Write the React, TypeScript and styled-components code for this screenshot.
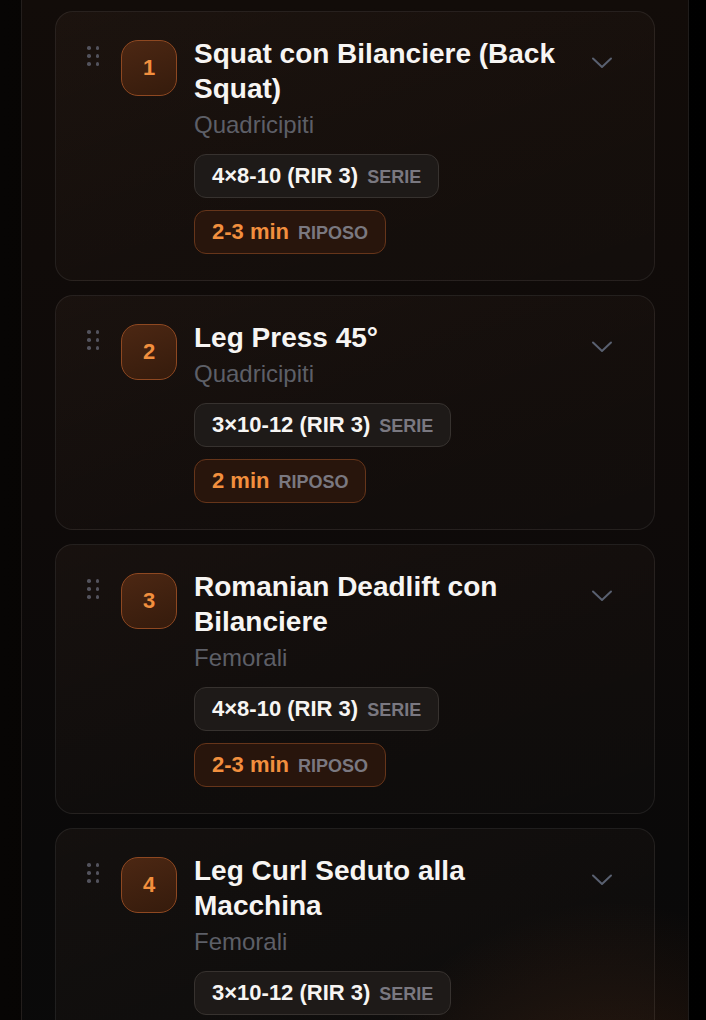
import React from 'react';
import styled, { createGlobalStyle } from 'styled-components';

const GlobalStyle = createGlobalStyle`
    html, body {
        margin: 0;
        padding: 0;
        background: #040303;
        font-family: "Liberation Sans", Arial, sans-serif;
        overflow: hidden;
    }
`;

interface Exercise {
    name: string;
    muscle: string;
    sets: string;
    rest: string;
}

const exercises: Exercise[] = [
    { name: 'Squat con Bilanciere (Back Squat)', muscle: 'Quadricipiti', sets: '4×8-10 (RIR 3)', rest: '2-3 min' },
    { name: 'Leg Press 45°', muscle: 'Quadricipiti', sets: '3×10-12 (RIR 3)', rest: '2 min' },
    { name: 'Romanian Deadlift con Bilanciere', muscle: 'Femorali', sets: '4×8-10 (RIR 3)', rest: '2-3 min' },
    { name: 'Leg Curl Seduto alla Macchina', muscle: 'Femorali', sets: '3×10-12 (RIR 3)', rest: '2 min' },
];

const Page = styled.div`
    display: flex;
    min-height: 100vh;
    padding: 0 17px 0 21px;
    background: linear-gradient(90deg, #070504 0%, #000 100%);
`;

const Panel = styled.div`
    flex: 1;
    display: flex;
    flex-direction: column;
    gap: 14px;
    padding: 11px 33px 40px;
    border-left: 1px solid #231e1c;
    border-right: 1px solid #1f1c1b;
    background:
        radial-gradient(circle at 88% 102%, rgba(190, 85, 25, 0.2) 0%, rgba(190, 85, 25, 0) 20%),
        linear-gradient(180deg, #120c09 0%, #0e0a09 45%, #0a0909 75%, #0a0a0a 100%);
`;

const Card = styled.div`
    display: flex;
    align-items: flex-start;
    padding: 24px 30px 26px 30px;
    border: 1px solid rgba(255, 255, 255, 0.075);
    border-radius: 18px;
    background: linear-gradient(160deg, rgba(255, 190, 150, 0.045) 0%, rgba(255, 200, 170, 0.025) 60%, rgba(255, 255, 255, 0.015) 100%);
`;

const Handle = styled.div`
    display: grid;
    grid-template-columns: repeat(2, 3.5px);
    grid-auto-rows: 3.5px;
    column-gap: 5px;
    row-gap: 4.5px;
    margin: 10px 22px 0 1px;
    span {
        width: 3.5px;
        height: 3.5px;
        border-radius: 50%;
        background: #53535d;
    }
`;

const Badge = styled.div`
    flex: none;
    box-sizing: border-box;
    width: 56px;
    height: 56px;
    margin-top: 4px;
    margin-right: 17px;
    display: flex;
    align-items: center;
    justify-content: center;
    border-radius: 17px;
    border: 1.5px solid #8e4821;
    background: linear-gradient(160deg, #4c2713 0%, #351b0c 100%);
    color: #f28f3e;
    font-size: 22px;
    font-weight: 700;
`;

const Content = styled.div`
    flex: 1;
    min-width: 0;
    display: flex;
    flex-direction: column;
    align-items: flex-start;
`;

const Title = styled.div`
    color: #f7f5f3;
    font-size: 28px;
    line-height: 35px;
    font-weight: 700;
`;

const Muscle = styled.div`
    margin-top: 3px;
    color: #5d5f67;
    font-size: 24px;
    line-height: 32px;
`;

const Pills = styled.div`
    margin-top: 13px;
    display: flex;
    flex-direction: column;
    align-items: flex-start;
    gap: 12px;
`;

const Pill = styled.div<{ $accent?: boolean }>`
    box-sizing: border-box;
    height: 44px;
    padding: 0 17px;
    display: inline-flex;
    align-items: center;
    gap: 9px;
    border-radius: 12px;
    border: 1.5px solid ${({ $accent }) => ($accent ? '#66351a' : '#37322f')};
    background: ${({ $accent }) => ($accent ? '#28150c' : '#1e1a18')};
`;

const PillValue = styled.span<{ $accent?: boolean }>`
    font-size: 22px;
    line-height: 26px;
    font-weight: 700;
    color: ${({ $accent }) => ($accent ? '#f28f3e' : '#f7f5f3')};
`;

const PillLabel = styled.span`
    font-size: 18px;
    line-height: 22px;
    padding-top: 2px;
    font-weight: 700;
    color: #7a7880;
`;

const Toggle = styled.button`
    flex: none;
    width: 44px;
    height: 44px;
    margin-top: 5px;
    padding: 0;
    border: none;
    background: transparent;
    display: flex;
    align-items: center;
    justify-content: center;
`;

function Chevron() {
    return (
        <svg width="22" height="12" viewBox="0 0 22 12" fill="none">
            <path d="M2 1.5 L11 10 L20 1.5" stroke="#596070" strokeWidth="2" strokeLinecap="round" strokeLinejoin="round" />
        </svg>
    );
}

export default function App() {
    return (
        <>
            <GlobalStyle />
            <Page>
                <Panel>
                    {exercises.map((ex, i) => (
                        <Card key={ex.name}>
                            <Handle>
                                {Array.from({ length: 6 }).map((_, d) => (
                                    <span key={d} />
                                ))}
                            </Handle>
                            <Badge>{i + 1}</Badge>
                            <Content>
                                <Title>{ex.name}</Title>
                                <Muscle>{ex.muscle}</Muscle>
                                <Pills>
                                    <Pill>
                                        <PillValue>{ex.sets}</PillValue>
                                        <PillLabel>SERIE</PillLabel>
                                    </Pill>
                                    <Pill $accent>
                                        <PillValue $accent>{ex.rest}</PillValue>
                                        <PillLabel>RIPOSO</PillLabel>
                                    </Pill>
                                </Pills>
                            </Content>
                            <Toggle aria-label="Espandi">
                                <Chevron />
                            </Toggle>
                        </Card>
                    ))}
                </Panel>
            </Page>
        </>
    );
}
